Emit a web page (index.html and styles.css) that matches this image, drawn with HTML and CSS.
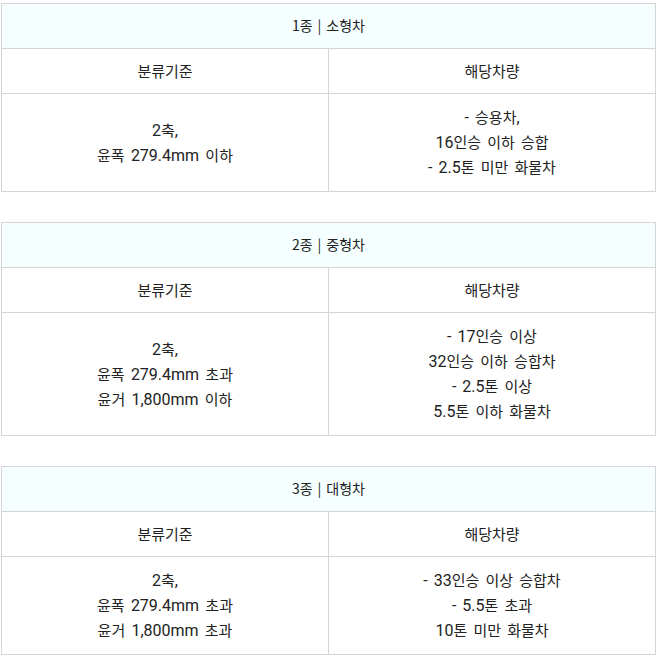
FILE: index.html
```html
<!DOCTYPE html>
<html lang="ko">
<head>
<meta charset="utf-8">
<link rel="stylesheet" href="styles.css">
</head>
<body>
<div class="wrap">
  <table class="car">
    <tr><th class="cell title" colspan="2">1종 | 소형차</th></tr>
    <tr><td class="cell head">분류기준</td><td class="cell head">해당차량</td></tr>
    <tr><td class="cell body"><span class="n">2</span>축<span class="n">,</span><br>윤폭 <span class="n">279.4mm</span> 이하</td><td class="cell body"><span class="n">-</span> 승용차<span class="n">,</span><br><span class="n">16</span>인승 이하 승합<br><span class="n">- 2.5</span>톤 미만 화물차</td></tr>
  </table>
  <table class="car">
    <tr><th class="cell title" colspan="2">2종 | 중형차</th></tr>
    <tr><td class="cell head">분류기준</td><td class="cell head">해당차량</td></tr>
    <tr><td class="cell body"><span class="n">2</span>축<span class="n">,</span><br>윤폭 <span class="n">279.4mm</span> 초과<br>윤거 <span class="n">1,800mm</span> 이하</td><td class="cell body"><span class="n">- 17</span>인승 이상<br><span class="n">32</span>인승 이하 승합차<br><span class="n">- 2.5</span>톤 이상<br><span class="n">5.5</span>톤 이하 화물차</td></tr>
  </table>
  <table class="car">
    <tr><th class="cell title" colspan="2">3종 | 대형차</th></tr>
    <tr><td class="cell head">분류기준</td><td class="cell head">해당차량</td></tr>
    <tr><td class="cell body"><span class="n">2</span>축<span class="n">,</span><br>윤폭 <span class="n">279.4mm</span> 초과<br>윤거 <span class="n">1,800mm</span> 초과</td><td class="cell body"><span class="n">- 33</span>인승 이상 승합차<br><span class="n">- 5.5</span>톤 초과<br><span class="n">10</span>톤 미만 화물차</td></tr>
  </table>
</div>
</body>
</html>
```
FILE: styles.css
```css
html, body {
  margin: 0;
  padding: 0;
  background: #ffffff;
}
.wrap {
  padding: 3px 3px 0 1px;
  display: flex;
  flex-direction: column;
  gap: 30px;
  font-family: "Noto Sans CJK KR", "Roboto", sans-serif;
  font-size: 15px;
  color: #222222;
  word-spacing: 2px;
}
.car {
  width: 655px;
  border-collapse: collapse;
  table-layout: fixed;
}
.cell {
  border: 1px solid #d5d5d5;
  text-align: center;
  line-height: 25px;
  font-weight: normal;
  padding: 0;
}
.cell.title {
  background: #f5ffff;
  padding: 9px 0 10px;
  font-size: 14px;
  word-spacing: 1px;
}
.cell.head {
  padding: 9px 0 10px;
}
.cell.body {
  padding: 10px 0 12px;
}
.n {
  font-family: "Roboto", sans-serif;
  font-size: 16px;
  line-height: 1;
}
```
